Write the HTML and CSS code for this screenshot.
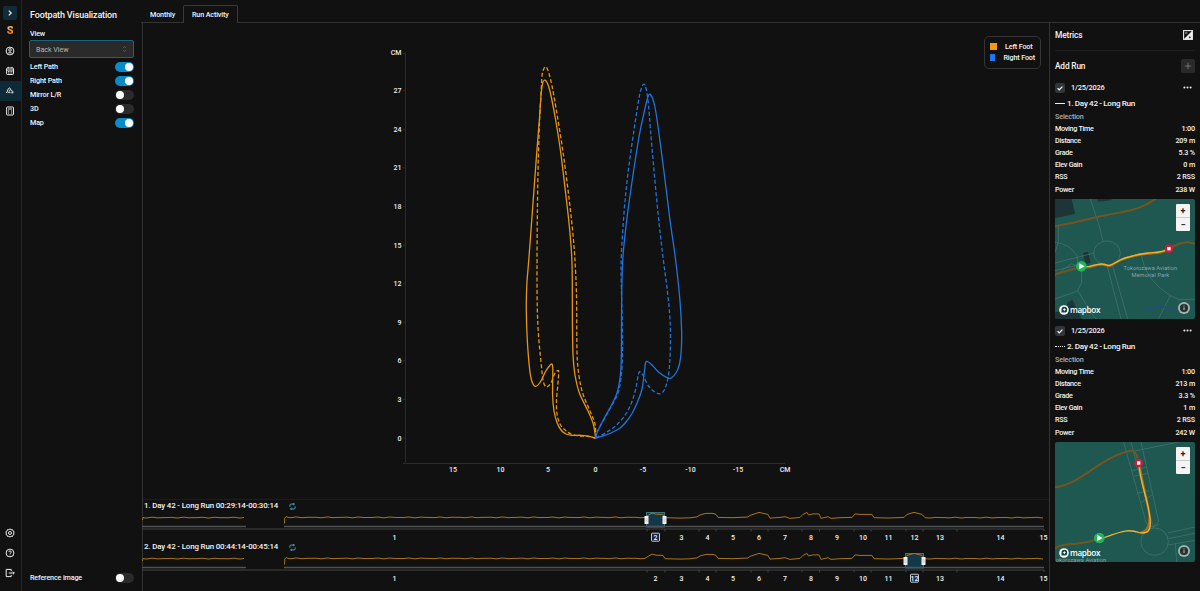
FILE: index.html
```html
<!DOCTYPE html>
<html lang="en">
<head>
    <meta charset="UTF-8">
    <meta name="viewport" content="width=device-width, initial-scale=1.0">
    <title>Footpath Visualization</title>
    <link rel="stylesheet" href="styles.css">
</head>
<body>
    <div class="app">
        <nav class="rail">
            <div class="rail-top">
                <a class="expand"><svg viewBox="0 0 14 14"><path d="M5.8 4.6 8.2 7 5.8 9.4"/></svg></a>
                <a class="logo"><span>S</span></a>
                <a><svg viewBox="0 0 14 14"><circle cx="7" cy="7" r="3.9"/><circle cx="7" cy="5.9" r="1.3"/><path d="M4.6 9.7C5 8.3 9 8.3 9.4 9.7"/></svg></a>
                <a><svg viewBox="0 0 14 14"><rect x="3.6" y="4" width="6.9" height="6.5" rx=".8"/><path d="M3.6 6h6.9M5.2 2.8V4.4M8.9 2.8v1.6M4.9 7.5h1M6.6 7.5h1M8.3 7.5h1M4.9 9h1M6.6 9h1M8.3 9h1"/></svg></a>
                <a class="active"><svg viewBox="0 0 14 14"><path d="M3 8.6C4.6 8.6 4.4 6.2 5.4 4.6c.6-.9 1.7-.9 2 .1l.8 2.1c1.1-.2 1.9.6 1.9 2H8.2M5 9.2c.2-1.9 2-1.9 2.2 0M6.1 6.300h.9"/></svg></a>
                <a><svg viewBox="0 0 14 14"><rect x="3.6" y="3" width="6.9" height="8" rx=".8"/><path d="M5 5h4.1M5 7h1.1M8 7h1.1M5 9h1.1M8 9h1.1"/></svg></a>
            </div>
            <div class="rail-bottom">
                <a><svg viewBox="0 0 14 14"><path d="M7 2.9l1.1.8 1.4-.1.4 1.3 1.2.8-.5 1.3.5 1.3-1.2.8-.4 1.3-1.4-.1-1.1.8-1.1-.8-1.4.1-.4-1.3-1.2-.8.5-1.3-.5-1.3 1.2-.8.4-1.3 1.4.1z"/><circle cx="7" cy="7" r="1.5"/></svg></a>
                <a><svg viewBox="0 0 14 14"><circle cx="7" cy="7" r="3.9"/><path d="M5.8 6.1c0-1.7 2.5-1.5 2.5 0 0 .8-1.3.9-1.3 1.8M7 8.6v.7"/></svg></a>
                <a><svg viewBox="0 0 14 14"><path d="M8.2 5.2V3.4H3.2v7.2h5V8.8M5.8 7h5.4M9.9 5.6 11.3 7 9.9 8.4"/></svg></a>
            </div>
        </nav>

        <aside class="options">
            <h1>Footpath Visualization</h1>
            <label class="view-label">View</label>
            <div class="select">Back View
                <svg viewBox="0 0 6 8"><path d="M1 3 3 1l2 2M1 5l2 2 2-2"/></svg>
            </div>
            <div class="option">Left Path<span class="toggle on"></span></div>
            <div class="option">Right Path<span class="toggle on"></span></div>
            <div class="option">Mirror L/R<span class="toggle"></span></div>
            <div class="option">3D<span class="toggle"></span></div>
            <div class="option">Map<span class="toggle on"></span></div>
            <div class="option reference">Reference image<span class="toggle"></span></div>
        </aside>

        <div class="content">
            <div class="tabs">
                <a class="tab">Monthly</a>
                <a class="tab selected">Run Activity</a>
            </div>
            <div class="body">
                <main class="activity">
                    <div class="chart">
                        <svg id="footpath" viewBox="142 24 907 474">
                            <path class="axis" d="M403 53.5h2.5V463.5H785M403 463.5h2"/>
                            <g id="yTicks" class="tick-text"></g>
                            <g id="xTicks" class="tick-text"></g>
                            <g id="curves"></g>
                        </svg>
                        <div class="legend">
                            <div><i class="left"></i>Left Foot</div>
                            <div><i class="right"></i>Right Foot</div>
                        </div>
                    </div>
                    <div class="timeline">
                        <div class="timeline-title"><span>1. Day 42 - Long Run 00:29:14-00:30:14</span><svg class="reset" viewBox="0 0 8 8"><path d="M1 4.2V2.6C1 1.5 1.8 1.2 2.6 1.2H6M7 3.8v1.6c0 1.1-.8 1.4-1.6 1.4H2M5 .3l1.2 1L5 2.3M3 5.8l-1.2 1L3 7.8"/></svg></div>
                        <svg class="track" id="track1" viewBox="142 511 907 32"></svg>
                    </div>
                    <div class="timeline">
                        <div class="timeline-title"><span>2. Day 42 - Long Run 00:44:14-00:45:14</span><svg class="reset" viewBox="0 0 8 8"><path d="M1 4.2V2.6C1 1.5 1.8 1.2 2.6 1.2H6M7 3.8v1.6c0 1.1-.8 1.4-1.6 1.4H2M5 .3l1.2 1L5 2.3M3 5.8l-1.2 1L3 7.8"/></svg></div>
                        <svg class="track" id="track2" viewBox="142 511 907 32"></svg>
                    </div>
                </main>

                <aside class="metrics">
                    <div class="metrics-head">Metrics
                        <svg viewBox="0 0 10 10"><rect x=".6" y=".6" width="8.8" height="8.8" fill="#111" stroke="#eee" stroke-width="1.1"/><path d="M9 1v8H1z" fill="#eee"/><path d="M2 3h2.4" stroke="#eee" stroke-width=".8"/><path d="M5.8 7.3h2M6.8 6.3v2" stroke="#111" stroke-width=".7"/></svg>
                    </div>
                    <div class="add-run">Add Run<button class="add"><svg viewBox="0 0 14 14"><path d="M7 3.8v6.4M3.8 7h6.4"/></svg></button></div>

                    <section class="run">
                        <div class="run-date"><span class="check"><svg viewBox="0 0 10 10"><path d="M2.6 5.2 4.2 6.8 7.4 3.6"/></svg></span>1/25/2026<svg class="dots" viewBox="0 0 9 3"><circle cx="1.4" cy="1.5" r="1"/><circle cx="4.5" cy="1.5" r="1"/><circle cx="7.6" cy="1.5" r="1"/></svg></div>
                        <div class="run-name"><i class="solid"></i>1. Day 42 - Long Run</div>
                        <div class="sub">Selection</div>
                        <div class="row"><span>Moving Time</span><span>1:00</span></div>
                        <div class="row"><span>Distance</span><span>209 m</span></div>
                        <div class="row"><span>Grade</span><span>5.3 %</span></div>
                        <div class="row"><span>Elev Gain</span><span>0 m</span></div>
                        <div class="row"><span>RSS</span><span>2 RSS</span></div>
                        <div class="row"><span>Power</span><span>238 W</span></div>
                        <div class="map">
                            <svg viewBox="0 0 420 360">
                                <g class="building">
                                    <path d="M0 0h50l10 44-60 14zM126 0h46l-6 4-36 4zM84 162l15-4 8 34-16 3zM36 312l16-10 28 58H0v-20l40-8z"/>
                                </g>
                                <g class="street">
                                    <path d="M106 0l28 84 10 44M0 160l10-30V76M0 192l118-30M0 215l92-22M0 130q44 4 66 40M66 170q-2 24 14 44v36L68 274l42 70 14 16M0 300l68-24M0 230l50-36 20 10"/>
                                    <ellipse cx="156" cy="162" rx="40" ry="36"/>
                                    <path d="M156 198l42 162M172 198l46 162M260 172q10 70 86 118l-36 70M346 290l26 12h48M260 172l-10-10"/>
                                </g>
                                <path class="water" d="M266 324q20 10 34 2t40 2 36-6 44 10"/>
                                <path class="trail" d="M0 82 60 70q80-20 140-30t104-42M0 226l56-16 24-6M342 149l28-14q30-10 50 0"/>
                                <path class="route-shade" d="M80 205l24-1C120 200 130 196 142 197c10 0 14 5 22 4 14-4 26-18 46-23C240 170 260 165 280 164c20-2 40 0 62-14"/>
                                <path class="route" d="M80 203l24-1C120 198 130 194 142 195c10 0 14 5 22 4 14-4 26-16 46-22C240 168 260 164 280 162c20-2 40 0 62-14"/>
                                <g class="place"><text x="286" y="212">Tokorozawa Aviation</text><text x="286" y="233">Memorial Park</text></g>
                                <g transform="translate(79 202)"><circle r="16" fill="#1fb559"/><path d="M-6-9 10 0-6 9z" fill="#fff"/></g>
                                <g transform="translate(342 149)"><circle r="13" fill="#c41f3e"/><rect x="-5" y="-5" width="10" height="10" fill="#fff"/></g>
                            </svg>
                            <div class="zoom"><b>+</b><b>−</b></div>
                            <div class="brand"><svg viewBox="0 0 28 28"><circle cx="14" cy="14" r="13.5" fill="#fff"/><path d="M7 21V13a8 8 0 1 1 8 8z" fill="#173f3b"/><path d="M15 8l1.5 3.5L20 13l-3.5 1.5L15 18l-1.5-3.5L10 13l3.5-1.5z" fill="#fff"/></svg>mapbox</div>
                            <svg class="info" viewBox="0 0 12 12"><circle cx="6" cy="6" r="6" fill="#a3b2b0"/><circle cx="6" cy="6" r="4.1" fill="#26302f"/><path d="M6 5.3v2.7M6 3.5v1" stroke="#a3b2b0" stroke-width="1.2"/></svg>
                        </div>
                    </section>

                    <section class="run">
                        <div class="run-date"><span class="check"><svg viewBox="0 0 10 10"><path d="M2.6 5.2 4.2 6.8 7.4 3.6"/></svg></span>1/25/2026<svg class="dots" viewBox="0 0 9 3"><circle cx="1.4" cy="1.5" r="1"/><circle cx="4.5" cy="1.5" r="1"/><circle cx="7.6" cy="1.5" r="1"/></svg></div>
                        <div class="run-name"><i class="dotted"></i>2. Day 42 - Long Run</div>
                        <div class="sub">Selection</div>
                        <div class="row"><span>Moving Time</span><span>1:00</span></div>
                        <div class="row"><span>Distance</span><span>213 m</span></div>
                        <div class="row"><span>Grade</span><span>3.3 %</span></div>
                        <div class="row"><span>Elev Gain</span><span>1 m</span></div>
                        <div class="row"><span>RSS</span><span>2 RSS</span></div>
                        <div class="row"><span>Power</span><span>242 W</span></div>
                        <div class="map">
                            <svg viewBox="0 0 420 360">
                                <g class="street">
                                    <path d="M206 0l68 244 24 14M228 0l65 250M258 0l53 238-17 16M234 28 420-10M232 86l40-10M246 154l36-8M258 182l34-24M238 102l42-8"/>
                                    <circle cx="299" cy="299" r="41"/>
                                    <path d="M338 273l82-18M341 290l79-16M338 309l82-14M361 304l4 56M276 250q20 10 36-4"/>
                                </g>
                                <path class="trail" d="M0 136C50 130 90 96 130 70S200 30 228 26Q244 28 248 50M0 318q30-14 60-12 40-4 74-16"/>
                                <path class="route-shade" d="M253 64c4 40 20 96 29 146 6 40-6 60-26 62"/>
                                <path class="route" d="M251 64c6 60 24 100 32 150 10 56-6 62-30 58-40-14-60 0-116 18"/>
                                <g class="place"><text x="78" y="359">okorozawa Aviation</text></g>
                                <g transform="translate(133 288)"><circle r="16" fill="#1fb559"/><path d="M-6-9 10 0-6 9z" fill="#fff"/></g>
                                <g transform="translate(251 63)"><circle r="13" fill="#c41f3e"/><rect x="-5" y="-5" width="10" height="10" fill="#fff"/></g>
                            </svg>
                            <div class="zoom"><b>+</b><b>−</b></div>
                            <div class="brand"><svg viewBox="0 0 28 28"><circle cx="14" cy="14" r="13.5" fill="#fff"/><path d="M7 21V13a8 8 0 1 1 8 8z" fill="#173f3b"/><path d="M15 8l1.5 3.5L20 13l-3.5 1.5L15 18l-1.5-3.5L10 13l3.5-1.5z" fill="#fff"/></svg>mapbox</div>
                            <svg class="info" viewBox="0 0 12 12"><circle cx="6" cy="6" r="6" fill="#a3b2b0"/><circle cx="6" cy="6" r="4.1" fill="#26302f"/><path d="M6 5.3v2.7M6 3.5v1" stroke="#a3b2b0" stroke-width="1.2"/></svg>
                        </div>
                    </section>
                </aside>
            </div>
        </div>
    </div>
    <script src="script.js"></script>
</body>
</html>
```
FILE: styles.css
```css
*{
    box-sizing: border-box;
}
body{
    margin: 0;
    background-color: #111;
    color: #f4f4f4;
    font-family: Roboto, "Liberation Sans", sans-serif;
    font-size: 7.2px;
    font-weight: 500;
    letter-spacing: -0.15px;
    overflow: hidden;
}
svg{
    display: block;
    fill: none;
}
.app{
    display: flex;
    width: 1200px;
    height: 591px;
}

/* icon rail */
.rail{
    width: 22px;
    border-right: 1px solid #262626;
    display: flex;
    flex-direction: column;
    justify-content: space-between;
    padding: 3px 0 8px;
}
.rail a{
    display: flex;
    width: 21px;
    height: 20px;
    padding-right: 1px;
    align-items: center;
    justify-content: center;
}
.rail svg{
    width: 14px;
    height: 14px;
    stroke: #ececec;
    stroke-width: 1;
}
.rail .active{
    background-color: #0e2a36;
}
.rail .expand svg{
    background-color: #0f2c38;
    border-radius: 2px;
    stroke-width: 1.2;
}
.rail .logo{
    height: 15px;
    margin-bottom: 3px;
}
.logo span{
    font-size: 11px;
    font-weight: 900;
    line-height: 13px;
    color: transparent;
    background: linear-gradient(#ffc04a 20%, #f0652a 85%);
    -webkit-background-clip: text;
    background-clip: text;
}

/* options */
.options{
    width: 120px;
    padding: 9px 8px 7px;
    display: flex;
    flex-direction: column;
}
.options h1{
    margin: 0;
    font-size: 9px;
    font-weight: 500;
    line-height: 12px;
    letter-spacing: -0.15px;
}
.view-label{
    margin-top: 8px;
    line-height: 9px;
}
.select{
    display: flex;
    justify-content: space-between;
    align-items: center;
    height: 18px;
    margin: 2px 0 1.5px -1px;
    padding: 0 6px;
    width: 105px;
    border: 1px solid #1b6482;
    border-radius: 2px;
    background-color: #2a2a2a;
    color: #b4b4b4;
    font-weight: 400;
    letter-spacing: -0.05px;
}
.select svg{
    width: 5px;
    height: 8px;
    stroke: #666;
    stroke-width: 0.8;
}
.option{
    display: flex;
    justify-content: space-between;
    align-items: center;
    height: 14px;
    line-height: 8px;
}
.toggle{
    width: 19px;
    height: 10px;
    border-radius: 5px;
    background-color: #2b2b2b;
    padding: 1px;
}
.toggle::before{
    content: "";
    display: block;
    width: 8px;
    height: 8px;
    border-radius: 50%;
    background-color: #fff;
}
.toggle.on{
    background-color: #0a8bc8;
}
.toggle.on::before{
    margin-left: 9px;
}
.reference{
    margin-top: auto;
    height: 12px;
}

/* tabs */
.content{
    flex: 1;
    display: flex;
    flex-direction: column;
}
.tabs{
    display: flex;
    height: 23px;
    padding-top: 5px;
    margin-left: -1px;
    box-shadow: inset 0 -1px 0 #333;
}
.tab{
    padding: 5px 9px 0;
    line-height: 9px;
    width: 42px;
}
.tab.selected{
    width: 55px;
    padding: 4px 8px 0;
    border: 1px solid #3a3a3a;
    border-bottom: 0;
    border-radius: 2px 2px 0 0;
    background-color: #111;
    white-space: nowrap;
}
.body{
    display: flex;
    flex: 1;
}
.activity{
    width: 907px;
    box-shadow: inset 1px 0 0 #333;
}

/* footpath chart */
.chart{
    position: relative;
    height: 476px;
    margin-left: 1px;
    border-bottom: 1px solid #1d1d1d;
}
#footpath{
    width: 907px;
    height: 474px;
    margin: 1px 0 0 -1px;
}
.axis{
    stroke: #2b2b2b;
}
.tick-text text{
    fill: #ececec;
    font-size: 7px;
    letter-spacing: 0;
}
.curve{
    stroke-width: 1.3;
}
.curve.dashed{
    stroke-dasharray: 4 2.2;
}
.legend{
    position: absolute;
    right: 8px;
    top: 12px;
    width: 57px;
    height: 33px;
    padding: 4px 5px;
    border: 1px solid #343434;
    border-radius: 5px;
}
.legend div{
    display: flex;
    align-items: center;
    height: 11px;
    line-height: 8px;
    white-space: nowrap;
}
.legend i{
    width: 7px;
    height: 7px;
    margin-right: 8px;
}
.legend .left{
    background-color: #f59b0b;
}
.legend .right{
    background-color: #1f78f0;
}

/* timelines */
.timeline{
    height: 41.4px;
    padding-top: 1px;
}
.timeline-title{
    display: flex;
    align-items: center;
    height: 10px;
    line-height: 8px;
    padding-left: 2px;
    font-size: 7.9px;
    white-space: nowrap;
    letter-spacing: -0.14px;
}
.reset{
    width: 7px;
    height: 7px;
    margin-left: 11px;
    stroke: #4fc3e8;
    stroke-width: 1;
}
.track{
    width: 907px;
    height: 32px;
}
.power{
    stroke: #a8751a;
    stroke-width: 1;
}
.base{
    stroke: #505253;
    stroke-width: 1.4;
}
.ruler{
    stroke: #404243;
}
.laps text{
    fill: #f4f4f4;
    font-size: 7px;
    text-anchor: middle;
    letter-spacing: 0;
}

/* metrics */
.metrics{
    flex: 1;
    border-left: 1px solid #333;
    padding: 0 5px;
}
.metrics-head{
    display: flex;
    justify-content: space-between;
    align-items: center;
    height: 28px;
    padding: 0 2px 3px 0;
    font-size: 8.4px;
    border-bottom: 1px solid #1e1e1e;
}
.metrics-head svg{
    width: 10px;
    height: 10px;
}
.add-run{
    display: flex;
    justify-content: space-between;
    align-items: center;
    height: 30px;
    font-size: 8.3px;
}
.add{
    width: 14px;
    height: 14px;
    padding: 0;
    border: 0;
    border-radius: 2px;
    background-color: #2a2a2a;
}
.add svg{
    stroke: #777;
    stroke-width: 0.9;
}
.run{
    height: 243px;
}
.run-date{
    display: flex;
    align-items: center;
    height: 13px;
    font-size: 7.4px;
    letter-spacing: -0.17px;
}
.check{
    width: 10px;
    height: 10px;
    margin-right: 6px;
    border-radius: 2px;
    background-color: #32363a;
}
.check svg{
    stroke: #fff;
    stroke-width: 1.2;
}
.dots{
    width: 9px;
    height: 3px;
    margin: 0 3px 0 auto;
    fill: #eee;
}
.run-name{
    display: flex;
    align-items: center;
    height: 18px;
    font-size: 8.1px;
    white-space: nowrap;
    word-spacing: -0.3px;
    letter-spacing: -0.25px;
}
.run-name i{
    width: 10px;
    margin-right: 2px;
    border-top: 1px solid #eee;
}
.run-name .dotted{
    border-top-style: dotted;
}
.sub{
    height: 11px;
    line-height: 10px;
    color: #b0b0b0;
}
.row{
    display: flex;
    justify-content: space-between;
    align-items: center;
    height: 12.1px;
    line-height: 8px;
}
.row span:first-child{
    letter-spacing: -0.28px;
}
.map{
    position: relative;
    width: 140px;
    height: 120px;
    margin-top: 3.4px;
    border-radius: 2px;
    overflow: hidden;
    background-color: #1f5751;
}
.building{
    fill: #1d3538;
}
.street{
    stroke: #4b7772;
    stroke-width: 2;
}
.water{
    stroke: #20507a;
    stroke-width: 4;
}
.trail{
    stroke: #75551f;
    stroke-width: 6;
}
.route-shade{
    stroke: #a86c12;
    stroke-width: 7;
}
.route{
    stroke: #f2b233;
    stroke-width: 4;
}
.place text{
    fill: #8aa3b0;
    font-size: 17px;
    font-weight: 400;
    text-anchor: middle;
    letter-spacing: 0.2px;
}
.zoom{
    position: absolute;
    top: 5px;
    right: 5px;
    width: 14px;
    height: 27px;
    border-radius: 1px;
    background-color: #f4f4f4;
    color: #222;
    text-align: center;
}
.zoom b{
    display: block;
    height: 13.5px;
    line-height: 14px;
    font-size: 9px;
}
.zoom b + b{
    border-top: 1px solid #ccc;
}
.brand{
    position: absolute;
    left: 4px;
    bottom: 4px;
    display: flex;
    align-items: center;
    gap: 1px;
    font-family: "Open Sans", sans-serif;
    font-size: 8.2px;
    font-weight: 600;
    line-height: 8px;
    letter-spacing: -0.35px;
    color: #fff;
}
.brand svg{
    width: 10px;
    height: 10px;
}
.info{
    position: absolute;
    right: 5px;
    bottom: 5px;
    width: 12px;
    height: 12px;
}
```
FILE: script.js
```js
const NS = "http://www.w3.org/2000/svg"
function add(parent, tag, attrs, text) {
    const el = document.createElementNS(NS, tag)
    for (const key in attrs) el.setAttribute(key, attrs[key])
    if (text !== undefined) el.textContent = text
    parent.appendChild(el)
    return el
}

// smooth line through the points
function spline(p) {
    let d = `M${p[0][0]} ${p[0][1]}`
    for (let i = 0; i < p.length - 1; i++) {
        const a = p[i - 1] || p[i], b = p[i], c = p[i + 1], e = p[i + 2] || c
        d += `C${b[0] + (c[0] - a[0]) / 6} ${b[1] + (c[1] - a[1]) / 6} ${c[0] - (e[0] - b[0]) / 6} ${c[1] - (e[1] - b[1]) / 6} ${c[0]} ${c[1]}`
    }
    return d
}

const yTicks = document.getElementById("yTicks")
for (let cm = 0; cm <= 27; cm += 3) {
    const y = 438 - cm * 12.86
    add(yTicks, "text", { x: 401.5, y: y + 2.5, "text-anchor": "end" }, cm)
    add(yTicks, "path", { d: `M403 ${y}h2`, class: "axis" })
}
add(yTicks, "text", { x: 401.5, y: 55, "text-anchor": "end" }, "CM")
const xTicks = document.getElementById("xTicks")
for (let cm = 15; cm >= -15; cm -= 5) {
    add(xTicks, "text", { x: 595.5 - cm * 9.5, y: 471.5, "text-anchor": "middle" }, cm)
}
add(xTicks, "text", { x: 785, y: 471.5, "text-anchor": "middle" }, "CM")

const curves = [
    { color: "#e8950f", dashed: false, points: [[595.7, 438.2], [593.3, 424], [588, 411], [579.5, 393.3], [575, 375], [573, 355], [572.4, 320], [572.3, 283], [571.7, 256], [569, 223], [565, 188], [560.5, 151], [556, 122], [551.5, 98], [548.5, 86], [546.3, 81.3], [544.5, 80.2], [542.8, 82.5], [541.2, 93], [539.5, 118], [536.7, 153], [533, 203], [529, 257], [526.8, 285], [526.3, 310], [527.3, 340], [529.5, 368], [531.8, 381], [535.3, 386.3], [540, 382.5], [545.5, 371.5], [549, 366.5], [552, 364], [552.8, 370], [552.6, 395], [554, 411], [557, 422.5], [561, 430], [566, 434], [572, 435.3], [581, 435.3], [588, 436.2], [595.7, 438.2]] },
    { color: "#e8950f", dashed: true, points: [[595.7, 438.2], [595, 424], [590, 411], [583, 394], [579, 376], [577, 352], [576.6, 300], [575.5, 270], [573.5, 240], [569, 198], [563, 152], [556, 108], [552, 86], [549, 73.5], [546.8, 67.8], [545.3, 67], [543.5, 69.5], [542, 76], [541, 95], [539.8, 115], [538.3, 160], [537.4, 210], [537, 270], [537.3, 308], [538.5, 335], [541, 362], [543, 380], [545.5, 386.5], [548, 386.3], [551.5, 382], [554.5, 374], [557.5, 370.7], [558.7, 372], [557.8, 385], [556.5, 400], [557, 414], [560, 424], [564.5, 429.5], [571, 434], [580, 436], [588, 436.3], [595.7, 438.2]] },
    { color: "#1f74de", dashed: false, points: [[595.7, 438.2], [597.5, 431.5], [603, 420.5], [611, 406], [617, 393], [620, 378], [621.3, 360], [621.5, 325], [621.8, 290], [623, 256], [627, 218], [633, 175], [639, 137], [644, 113], [647, 100], [649, 94.7], [650.8, 95], [653, 99.5], [655.5, 110], [658.5, 130], [664, 172], [670, 220], [675.5, 259], [680, 301], [681.6, 330], [681.3, 350], [679.5, 364], [676, 373], [670.5, 378.3], [665, 376.5], [658, 371.5], [651.5, 364.5], [647.5, 361.6], [645.5, 363], [644, 375], [642, 389], [637.5, 402], [632, 413.5], [626, 422], [619.5, 428.5], [611, 433], [604, 435.7], [595.7, 438.2]] },
    { color: "#1f74de", dashed: true, points: [[595.7, 438.2], [597.5, 431.5], [603.5, 420.5], [611, 407], [618, 393], [621, 378], [622.5, 355], [622.2, 320], [621.2, 280], [621.3, 256], [624, 213], [628, 173], [634, 130], [638.5, 101], [641, 89.5], [643.8, 84.2], [646.2, 89], [648.5, 105], [650.5, 130], [653.5, 165], [658, 213], [662.7, 255], [667.5, 292], [670.3, 325], [670, 358], [668, 378], [664.5, 389.5], [660.5, 393.7], [655, 392], [648.5, 386], [643.5, 376], [640.5, 372], [638.5, 374], [635.5, 390], [631, 404], [624.5, 416], [615.5, 426], [607, 432], [595.7, 438.2]] }
]
const curveLayer = document.getElementById("curves")
curves.forEach(c => {
    add(curveLayer, "path", { d: spline(c.points), stroke: c.color, class: c.dashed ? "curve dashed" : "curve" })
})

// power line over the whole run, y is the offset from its resting level
const bumps = [[645, 0], [648, -2], [652, -4.3], [656, -3.2], [663, -3], [665, .3], [680, .7], [690, .4], [697, -.5], [700, -2.5], [706, -4], [713, -4], [716, -3], [718, 0], [733, .3], [748, -.4], [750, -2], [759, -5], [768, -3], [770, .7], [780, 0], [785, -.7], [790, 1], [800, 0], [803, -3], [807, -5], [808.5, -2.5], [813, -3.5], [819, -3.5], [821, 1], [828, -.7], [831, 1], [840, .3], [852, 0], [855, -3.5], [860, -3], [872, -3], [874, .3], [889, .6], [904, 0], [907, -3], [914, -5], [922, -3], [925, .3]]
function noisy(from, to, y) {
    const out = []
    for (let x = from; x <= to; x += 3) out.push([x, y + Math.sin(x * 1.7) * .25 + Math.sin(x * .61) * .2])
    return out
}
const laps = [394.5, 655.5, 681.5, 707.5, 733, 759, 785, 811, 837, 863, 888.5, 914.5, 940, 1000.5, 1043.5]
const marks = [647, 665, 699, 716, 751, 768, 802, 819.5, 854, 871, 906, 923, 957]

function drawTrack(id, selected) {
    const svg = document.getElementById(id)
    const x1 = laps[selected - 1] - 9
    const y = 517.4
    add(svg, "rect", { x: x1, y: 512.5, width: 18, height: 14.5, fill: "#12384a", stroke: "#3a7480" })
    add(svg, "path", { class: "base", d: "M142 526.5H246M284 526.5H1044" })
    add(svg, "path", { class: "ruler", d: "M142 531V529H1044V531" + marks.map(m => `M${m} 529v2.5`).join("") })
    add(svg, "polyline", { class: "power", points: [[142.5, 520], [143, 517.5], ...noisy(145, 246, y + .2)].join(" ") })
    const line = [[284.5, 523.5], [284.8, 518], [286, 516.5], ...noisy(289, 642, y), ...bumps.map(b => [b[0], y + b[1]]), ...noisy(929, 1044, y + .2)]
    add(svg, "polyline", { class: "power", points: line.join(" ") })
    const handles = [x1, x1 + 18]
    handles.forEach(x => {
        add(svg, "rect", { x: x - 2, y: 516, width: 4, height: 8, rx: .5, fill: "#f2f2f2" })
        add(svg, "path", { d: `M${x - .5} 518v4M${x + .6} 518v4`, stroke: "#aaa", "stroke-width": .4 })
    })
    add(svg, "rect", { x: laps[selected - 1] - 4, y: 533.2, width: 8, height: 8, rx: .7, fill: "#1a2142", stroke: "#ddd", "stroke-width": .9 })
    const g = add(svg, "g", { class: "laps" })
    laps.forEach((x, i) => add(g, "text", { x: x, y: 539.7 }, i + 1))
}
drawTrack("track1", 2)
drawTrack("track2", 12)
```
